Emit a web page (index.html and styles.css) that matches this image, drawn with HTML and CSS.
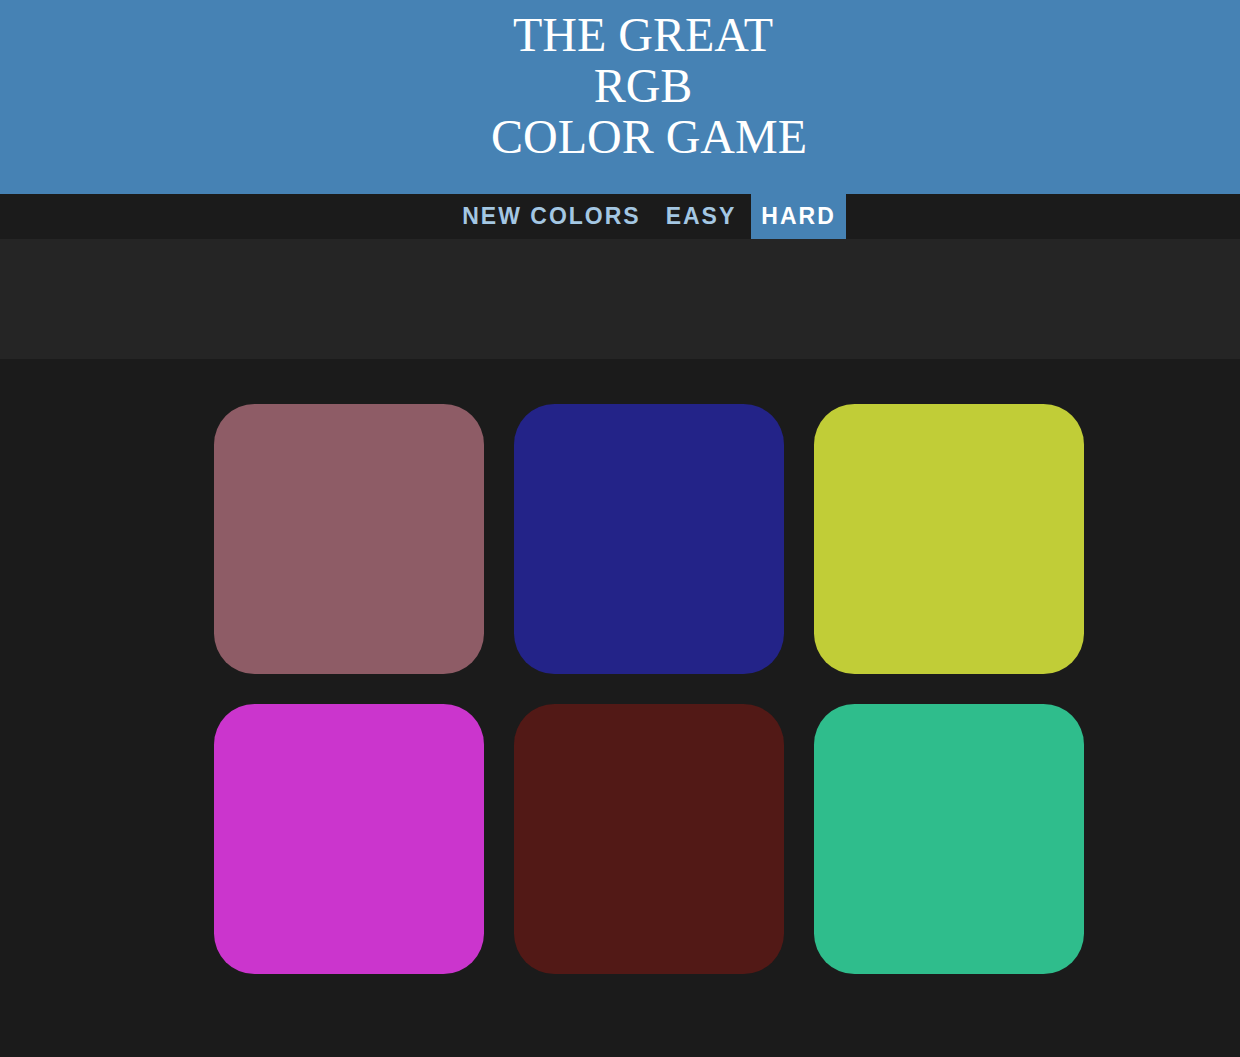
FILE: index.html
```html
<!DOCTYPE html>
<html lang="en">
<head>
<meta charset="utf-8">
<title>The Great RGB Color Game</title>
<link rel="stylesheet" href="styles.css">
</head>
<body>
<header class="header">
  <h1 class="title">
    <span class="title-line title-line--pad">The Great</span>
    <span class="title-line title-line--pad">RGB</span>
    <span class="title-line">Color Game</span>
  </h1>
</header>
<nav class="stripe">
  <button class="btn">New Colors</button>
  <button class="btn">Easy</button>
  <button class="btn btn--selected">Hard</button>
</nav>
<div class="message-band"></div>
<main class="main">
  <div class="grid">
    <div class="square" style="background: #8e5c66"></div>
    <div class="square" style="background: #232388"></div>
    <div class="square" style="background: #c1cd37"></div>
    <div class="square" style="background: #cb35cd"></div>
    <div class="square" style="background: #521916"></div>
    <div class="square" style="background: #2fbd8c"></div>
  </div>
</main>
</body>
</html>
```
FILE: styles.css
```css
html, body {
  margin: 0;
  padding: 0;
}

body {
  background: #1b1b1b;
  font-family: "Liberation Sans", Arial, sans-serif;
  min-height: 1057px;
}

.header {
  background: #4682b4;
  padding: 9px 0 32px 58px;
}

.title {
  margin: 0;
  font-family: "Liberation Serif", "Times New Roman", serif;
  font-weight: normal;
  font-size: 48px;
  line-height: 51px;
  color: #ffffff;
  text-transform: uppercase;
  text-align: center;
}

.title-line {
  display: block;
}

.title-line--pad {
  padding-right: 12px;
}

.stripe {
  background: #1b1b1b;
  height: 45px;
  display: flex;
  justify-content: center;
  align-items: stretch;
  gap: 5px;
  padding-left: 58px;
}

.btn {
  border: none;
  background: none;
  margin: 0;
  padding: 0 10px;
  font-family: "Liberation Sans", Arial, sans-serif;
  font-weight: bold;
  font-size: 23px;
  letter-spacing: 2px;
  text-transform: uppercase;
  color: #a4c7e3;
  cursor: pointer;
}

.btn--selected {
  background: #4682b4;
  color: #ffffff;
}

.message-band {
  background: #252525;
  height: 120px;
}

.main {
  padding: 30px 0 0 58px;
}

.grid {
  max-width: 900px;
  margin: 0 auto;
  display: flex;
  flex-wrap: wrap;
}

.square {
  width: 270px;
  height: 270px;
  margin: 15px;
  border-radius: 15%;
}
```
